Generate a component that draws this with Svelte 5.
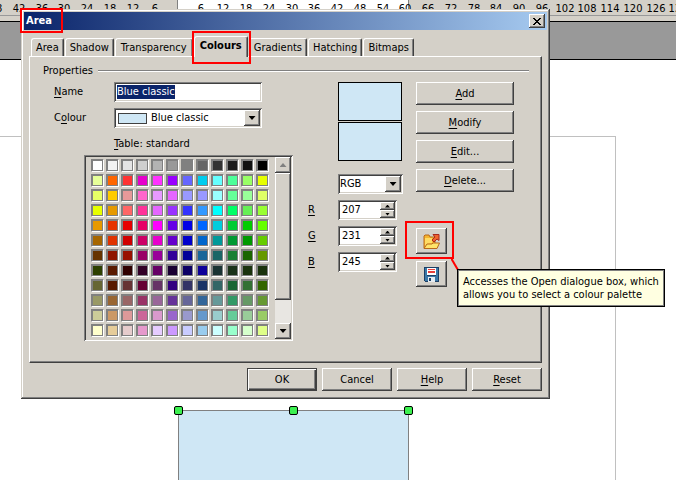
<script lang="ts">
  const tabs = ['Area', 'Shadow', 'Transparency', 'Colours', 'Gradients', 'Hatching', 'Bitmaps'];
  let activeTab = $state('Colours');

  let name = $state('Blue classic');
  let colour = $state('Blue classic');
  let model = $state('RGB');
  let current = $state('#cfe7f5');

  let channels = $state([
    { key: 'R', value: 207 },
    { key: 'G', value: 231 },
    { key: 'B', value: 245 }
  ]);

  const palette = [
    'ffffff f2f2f2 e4e4e4 cfcfcf b3b3b3 999999 808080 666666 333333 1c1c1c 111111 000000',
    'e6ff99 ff6600 ff3333 e600cc ff33ff 9900ff 6666ff 00ccee 66ffff 4dff99 99ff66 e6ff00',
    'e6ff66 ffcc00 e69999 ff66cc e699ff e566ff 9999ff 9999ff 99ffff 66ff99 99ff99 dfff66',
    'e6ff00 e69900 ff6666 ff3399 e566ff 9933ff 3333ff 3399ff 00ffff 00ff66 66f055 99ff33',
    'e69900 e63300 e60000 e60066 ff00ff 6600e6 0000e6 0066ff 00ccdd 00cc33 00cc00 66ff00',
    'a66600 e03300 d00000 cc0066 e600cc 6600cc 0000cc 0066cc 009999 009933 009900 66cc00',
    '663300 8f1500 991100 990066 990099 330099 000099 1a6699 1a6666 1a8033 1a6600 669900',
    '2d4000 591a00 300000 330026 660066 1a0033 0d0066 0d0099 1a3333 1a3319 1a330d 1a330d',
    '666633 591a00 663333 660033 663366 330080 333366 1a3366 336666 1a6633 337033 336600',
    '999966 996633 996666 993366 996699 663399 666699 336699 669999 339966 669966 669933',
    'cccc99 cc9966 dd9999 cc6699 d999cc 9966cc 9999cc 6699cc 99cccc 66cc99 99cc99 99cc66',
    'ffffcc e6cc99 e6cccc e699cc e6ccff cc99ff c9ccff 99ccee ccffff 99ffcc d5ffcc dfff88'
  ].flatMap((row) => row.split(' ').map((c) => '#' + c));

  // ruler marks every 6 units, zero sits on the left edge of the selected shape
  const marks = Array.from({ length: 31 }, (_, i) => (i - 8) * 6).filter((n) => n !== 0);
  const ORIGIN = 178;
  const UNIT = 3.79;

  function step(i: number, by: number) {
    channels[i].value = Math.max(0, Math.min(255, channels[i].value + by));
  }
</script>

<main class="desktop">
  <div class="ruler">
    <div class="ruler-range"></div>
    {#each marks as n}
      <span class="mark" style="left: {Math.round(ORIGIN + n * UNIT)}px">{Math.abs(n)}</span>
    {/each}
  </div>
  <div class="backdrop"></div>
  <div class="page"></div>
  <div class="shape">
    <i class="handle start"></i>
    <i class="handle middle"></i>
    <i class="handle end"></i>
  </div>

  <div class="dialog" role="dialog" aria-labelledby="dialog-title">
    <header class="titlebar">
      <h1 id="dialog-title">Area</h1>
      <button class="close" aria-label="Close">
        <svg width="8" height="7" viewBox="0 0 8 7" shape-rendering="crispEdges">
          <path d="M0 0h2v1h1v1h2V1h1V0h2v1H7v1H6v1H5v1h1v1h1v1h1v1H6V6H5V5H3v1H2v1H0V6h1V5h1V4h1V3H2V2H1V1H0z" />
        </svg>
      </button>
      <span class="outline outline-title"></span>
    </header>

    <div class="tabs" role="tablist">
      {#each tabs as tab}
        <button
          class="tab"
          class:active={tab === activeTab}
          role="tab"
          aria-selected={tab === activeTab}
          onclick={() => (activeTab = tab)}
        >
          {tab}
          {#if tab === 'Colours'}<span class="outline outline-tab"></span>{/if}
        </button>
      {/each}
    </div>

    <section class="panel">
      <div class="group-head">
        <h2>Properties</h2>
        <span class="rule"></span>
      </div>

      <div class="columns">
        <div class="left">
          <div class="field">
            <label for="name"><u>N</u>ame</label>
            <div class="sunken name-box">
              <span class="selection"><input id="name" type="text" size="1" bind:value={name} /></span>
            </div>
          </div>
          <div class="field">
            <label for="colour">C<u>o</u>lour</label>
            <div class="sunken combo">
              <span class="chip" style="background: {current}"></span>
              <select id="colour" bind:value={colour}>
                <option>Blue classic</option>
              </select>
              <span class="drop"><span class="arrow down"></span></span>
            </div>
          </div>
          <p class="table-name"><u>T</u>able: standard</p>
          <div class="sunken table">
            <div class="swatches">
              {#each palette as c}
                <button class="swatch" style="background: {c}" aria-label={c} onclick={() => (current = c)}></button>
              {/each}
            </div>
            <div class="scrollbar">
              <button class="scroll-btn" aria-label="Scroll up"><span class="arrow up"></span></button>
              <div class="thumb"></div>
              <div class="track"></div>
              <button class="scroll-btn" aria-label="Scroll down"><span class="arrow down"></span></button>
            </div>
          </div>
        </div>

        <div class="middle-col">
          <div class="previews">
            <div class="preview" style="background: {current}"></div>
            <div class="preview" style="background: {current}"></div>
          </div>
          <div class="sunken combo model">
            <select aria-label="Colour model" bind:value={model}>
              <option>RGB</option>
              <option>CMYK</option>
            </select>
            <span class="drop"><span class="arrow down"></span></span>
          </div>
          {#each channels as ch, i}
            <div class="channel">
              <label for="ch-{ch.key}"><u>{ch.key}</u></label>
              <div class="sunken spin">
                <input id="ch-{ch.key}" type="text" bind:value={ch.value} />
                <div class="spin-btns">
                  <button aria-label="Increase" onclick={() => step(i, 1)}><span class="arrow tiny up"></span></button>
                  <button aria-label="Decrease" onclick={() => step(i, -1)}><span class="arrow tiny down"></span></button>
                </div>
              </div>
            </div>
          {/each}
        </div>

        <div class="right">
          <button class="btn"><span><u>A</u>dd</span></button>
          <button class="btn"><span><u>M</u>odify</span></button>
          <button class="btn"><span><u>E</u>dit...</span></button>
          <button class="btn"><span><u>D</u>elete...</span></button>

          <div class="file-btns">
            <button class="btn icon" aria-label="Open" aria-describedby="open-tip">
              <svg width="17" height="17" viewBox="0 0 17 17">
                <path d="M1 15V3l1-1h4l1 2h5v7" fill="#f5b52e" stroke="#b8691a" />
                <path d="M2 5h7v5l-5 1-2 3z" fill="#ffdc64" />
                <path d="M1 15.500l3-4.500h5l1-1h6.500l-2.500 5.500z" fill="#ffe46a" stroke="#b8691a" />
                <path d="M10 1.500h6v6l-2-1.500-3 3-2-2 3-3z" fill="#f0642c" stroke="#a8281c" />
              </svg>
              <span class="outline outline-open"></span>
              <svg class="leader" width="8" height="13" viewBox="0 0 8 13">
                <path d="M0 0L7 12" stroke="#f00" stroke-width="2" />
              </svg>
              <span class="tip" id="open-tip" role="tooltip">Accesses the Open dialogue box, which<br />allows you to select a colour palette</span>
            </button>
            <button class="btn icon" aria-label="Save">
              <svg width="15" height="15" viewBox="0 0 15 15" shape-rendering="crispEdges">
                <path d="M0 0h15v15H1l-1-1z" fill="#1c3f66" />
                <path d="M1 1h2v8h9V1h2v13H1z" fill="#3a78a8" />
                <path d="M3 1h9v7H3z" fill="#fff" />
                <path d="M4 2h7v1H4zM4 4h7v2H4z" fill="#e8403c" />
                <path d="M4 10h7v5H4z" fill="#e6ecf2" />
                <path d="M5 11h2v3H5z" fill="#1c3f66" />
              </svg>
            </button>
          </div>
        </div>
      </div>
    </section>

    <footer class="actions">
      <button class="btn default"><span>OK</span></button>
      <button class="btn"><span>Cancel</span></button>
      <button class="btn"><span><u>H</u>elp</span></button>
      <button class="btn"><span><u>R</u>eset</span></button>
    </footer>
  </div>
</main>

<style>
  :global(body) {
    margin: 0;
    background: #fff;
  }

  .desktop {
    position: relative;
    height: 100vh;
    overflow: hidden;
    font: 11px/14px 'DejaVu Sans Condensed', 'DejaVu Sans', sans-serif;
    font-stretch: condensed;
    color: #000;
  }

  .desktop *,
  .desktop {
    box-sizing: border-box;
  }

  button,
  input,
  select {
    font: inherit;
    color: inherit;
    margin: 0;
    padding: 0;
    border: 0;
    border-radius: 0;
    background: none;
    outline: none;
    appearance: none;
  }

  u {
    text-underline-offset: 2px;
  }

  /* document behind the dialog */
  .ruler {
    position: relative;
    height: 21px;
    background: linear-gradient(#d4d0c8 15px, #999 15px, #999 16px, #d4d0c8 16px);
  }

  .ruler-range {
    position: absolute;
    left: 177px;
    top: 0;
    width: 232px;
    height: 15px;
    background: #fff;
    border-left: 1px solid #808080;
    border-right: 1px solid #808080;
  }

  .mark {
    position: absolute;
    top: 2px;
    transform: translateX(-50%);
  }

  .backdrop {
    height: 39px;
    background: #999;
    border-top: 1px solid #000;
    border-bottom: 1px solid #000;
  }

  .page {
    position: absolute;
    left: 0;
    top: 136px;
    bottom: 0;
    width: 616px;
    border-top: 1px solid #c0c0c0;
    border-right: 1px solid #c0c0c0;
  }

  .shape {
    position: absolute;
    left: 178px;
    top: 410px;
    bottom: 0;
    width: 231px;
    background: #cfe7f5;
    border: 1px solid #808080;
    border-bottom: 0;
  }

  .handle {
    position: absolute;
    top: -5px;
    width: 9px;
    height: 9px;
    background: #3cf050;
    border: 1px solid #000;
    border-radius: 2px;
  }

  .start {
    left: -5px;
  }

  .middle {
    left: 110px;
  }

  .end {
    right: -5px;
  }

  /* dialog */
  .dialog {
    position: absolute;
    left: 21px;
    top: 9px;
    width: 529px;
    padding: 3px;
    background: #d4d0c8;
    box-shadow:
      inset -1px -1px #404040,
      inset 1px 1px #d4d0c8,
      inset -2px -2px #808080,
      inset 2px 2px #fff;
  }

  .titlebar {
    position: relative;
    display: flex;
    align-items: center;
    justify-content: space-between;
    height: 18px;
    padding: 0 2px;
    background: linear-gradient(to right, #0a246a, #a6caf0);
  }

  h1 {
    margin: 0;
    font-size: 11px;
    line-height: 18px;
    color: #fff;
  }

  .close {
    display: flex;
    align-items: center;
    justify-content: center;
    width: 16px;
    height: 14px;
  }

  .close,
  .btn,
  .drop,
  .scroll-btn,
  .thumb,
  .spin-btns button {
    background: #d4d0c8;
    box-shadow:
      inset -1px -1px #404040,
      inset 1px 1px #fff,
      inset -2px -2px #808080;
  }

  .outline {
    position: absolute;
    border: 2px solid #f00;
    pointer-events: none;
  }

  .outline-title {
    left: -4px;
    top: -4px;
    width: 43px;
    height: 25px;
  }

  .outline-tab {
    inset: -6px -4px -7px -3px;
  }

  .outline-open {
    inset: -7px -7px -5px -11px;
  }

  .tabs {
    display: flex;
    align-items: flex-end;
    gap: 1px;
    height: 26px;
    padding: 0 7px;
  }

  .tab {
    position: relative;
    height: 18px;
    padding: 0 4px;
    border: 1px solid #fff;
    border-right-color: #404040;
    border-bottom: 0;
    border-radius: 3px 2px 0 0;
    box-shadow: inset -1px 0 #808080;
  }

  .tab:nth-child(3) {
    padding: 0 5px;
  }

  .tab.active {
    z-index: 1;
    height: 21px;
    margin-bottom: -1px;
    padding: 0 5px 2px;
    font-weight: bold;
    background: #d4d0c8;
  }

  .panel {
    margin: 0 5px;
    padding: 7px 13px 21px;
    border: 1px solid #fff;
    border-right-color: #404040;
    border-bottom-color: #404040;
    box-shadow: inset -1px -1px #808080;
  }

  .group-head {
    display: flex;
    align-items: center;
    gap: 5px;
  }

  h2 {
    margin: 0;
    font-size: 11px;
    font-weight: normal;
  }

  .rule {
    flex: 1;
    height: 2px;
    margin-right: -1px;
    border-top: 1px solid #808080;
    border-bottom: 1px solid #fff;
  }

  .columns {
    display: flex;
    align-items: flex-start;
    padding: 4px 0 0 11px;
  }

  .left {
    display: flex;
    flex-direction: column;
    gap: 6px;
    width: 239px;
    margin-right: 15px;
  }

  .field {
    display: flex;
    align-items: center;
  }

  .field label {
    width: 60px;
  }

  .sunken {
    display: flex;
    padding: 2px;
    background: #fff;
    box-shadow:
      inset 1px 1px #808080,
      inset -1px -1px #fff,
      inset 2px 2px #404040,
      inset -2px -2px #d4d0c8;
  }

  .name-box,
  .combo {
    width: 148px;
    height: 20px;
  }

  .name-box {
    align-items: center;
    padding-left: 3px;
  }

  .selection {
    display: flex;
    background: #0a246a;
    color: #fff;
  }

  .selection input {
    field-sizing: content;
  }

  .combo {
    align-items: center;
  }

  .chip {
    width: 29px;
    height: 11px;
    margin: 0 4px 0 2px;
    border: 1px solid #404040;
  }

  select {
    flex: 1;
    min-width: 0;
  }

  .drop {
    display: flex;
    align-items: center;
    justify-content: center;
    width: 16px;
    height: 16px;
    pointer-events: none;
  }

  .arrow {
    width: 7px;
    height: 4px;
    background: #000;
    clip-path: polygon(0 0, 100% 0, 50% 100%);
  }

  .arrow.up {
    clip-path: polygon(50% 0, 100% 100%, 0 100%);
  }

  .arrow.tiny {
    width: 5px;
    height: 3px;
  }

  .table-name {
    margin: 3px 0 -2px 60px;
  }

  .table {
    justify-content: space-between;
    height: 186px;
    margin-left: 30px;
    background: #d4d0c8;
  }

  .swatches {
    display: grid;
    grid-template-columns: repeat(12, 13px);
    grid-auto-rows: 13px;
    gap: 2px;
    padding: 2px 0 0 5px;
  }

  .swatch {
    border: 1px solid #808080;
    border-right-color: #fff;
    border-bottom-color: #fff;
    box-shadow: inset 1px 1px #808080, inset -1px -1px #808080;
  }

  .scrollbar {
    display: flex;
    flex-direction: column;
    width: 16px;
    background: #e8e6e2;
  }

  .scroll-btn {
    display: flex;
    align-items: center;
    justify-content: center;
    height: 16px;
  }

  .scroll-btn .up {
    background: #808080;
  }

  .thumb {
    height: 127px;
  }

  .track {
    flex: 1;
  }

  .middle-col {
    display: flex;
    flex-direction: column;
    gap: 6px;
    width: 95px;
    margin-right: 13px;
  }

  .previews {
    display: flex;
    flex-direction: column;
    gap: 1px;
    margin: 0 1px 7px 30px;
  }

  .preview {
    height: 39px;
    border: 1px solid #000;
  }

  .model {
    width: 65px;
    margin-left: 30px;
  }

  .channel {
    display: flex;
    align-items: center;
  }

  .channel label {
    width: 30px;
  }

  .spin {
    width: 59px;
    height: 20px;
  }

  .spin input {
    flex: 1;
    min-width: 0;
    padding-left: 2px;
  }

  .spin-btns {
    display: flex;
    flex-direction: column;
    width: 15px;
  }

  .spin-btns button {
    display: flex;
    align-items: center;
    justify-content: center;
    height: 8px;
  }

  .right {
    display: flex;
    flex-direction: column;
    gap: 6px;
    width: 98px;
  }

  .btn {
    height: 23px;
  }

  .file-btns {
    display: flex;
    flex-direction: column;
    gap: 7px;
    margin-top: 30px;
  }

  .icon {
    position: relative;
    display: flex;
    align-items: center;
    justify-content: center;
    width: 31px;
    height: 26px;
  }

  .leader {
    position: absolute;
    left: 35px;
    top: 30px;
  }

  .tip {
    position: absolute;
    z-index: 2;
    left: 41px;
    top: 41px;
    padding: 5px 5px 5px 5px;
    border: 1px solid #000;
    box-shadow: inset -1px -1px #808080, inset 1px 1px #808080;
    background: #ffffe1;
    text-align: left;
    line-height: 13px;
    white-space: nowrap;
  }

  .actions {
    display: flex;
    justify-content: flex-end;
    gap: 5px;
    padding: 5px 5px 5px 0;
  }

  .actions .btn {
    width: 70px;
  }

  .actions .default {
    box-shadow:
      inset 0 0 0 1px #404040,
      inset 2px 2px #fff,
      inset -2px -2px #404040,
      inset -3px -3px #808080;
  }
</style>
